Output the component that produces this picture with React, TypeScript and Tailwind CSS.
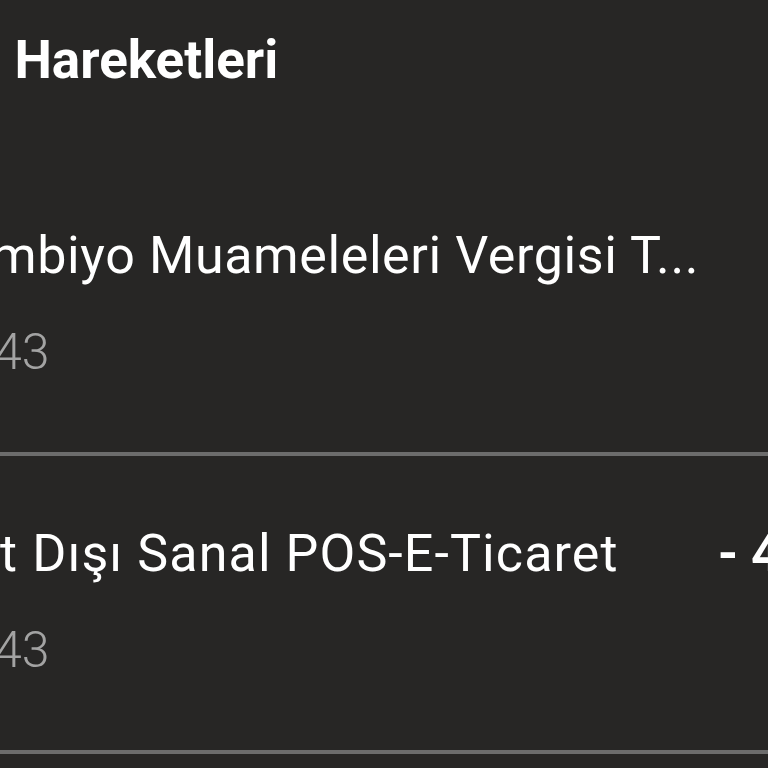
import React from "react";

const font = { fontFamily: "Roboto, 'Noto Sans', sans-serif" };

function Row({
  title,
  titleCls,
  date,
  amount,
}: {
  title: string;
  titleCls: string;
  date: string;
  amount: string;
}) {
  return (
    <div className="flex flex-col">
      <div className="flex flex-col pt-[68px] pb-[70px]">
        <div className="flex items-start w-[985px]">
          <div
            className={`min-w-0 text-[52px] leading-[60px] text-white whitespace-nowrap ${titleCls}`}
          >
            {title}
          </div>
          <div className="ml-auto shrink-0 pl-[24px] text-[52px] leading-[60px] font-bold text-white whitespace-pre text-right">
            {amount}
          </div>
        </div>
        <div className="mt-[36px] ml-[-330px] text-[50px] leading-[60px] font-light text-[#a3a3a3] whitespace-nowrap">
          {date}
        </div>
      </div>
      <div className="h-[4px] w-full bg-[#6c6c6c]" />
    </div>
  );
}

export default function App() {
  return (
    <div
      className="w-[768px] h-[768px] overflow-hidden bg-[#272625] flex flex-col"
      style={font}
    >
      <div className="pt-[30px] flex items-start gap-[20px] text-[53px] leading-[60px] font-bold text-white whitespace-nowrap ml-[-157px]">
        <span>Hesap</span>
        <span>Hareketleri</span>
      </div>
      <div className="mt-[68px] flex flex-col">
        <Row
          title="Kambiyo Muameleleri Vergisi T..."
          titleCls="ml-[-71px] tracking-[0.6px]"
          date="12.03.2024 15:43"
          amount="- 0,90 TL"
        />
        <Row
          title="Yurt Dışı Sanal POS-E-Ticaret"
          titleCls="ml-[-81px] tracking-[1.1px]"
          date="12.03.2024 15:43"
          amount="- 450,00 TL"
        />
        <Row
          title="Yurt Dışı Sanal POS-E-Ticaret"
          titleCls="ml-[-81px] tracking-[1.1px]"
          date="11.03.2024 10:21"
          amount="- 120,00 TL"
        />
      </div>
    </div>
  );
}
